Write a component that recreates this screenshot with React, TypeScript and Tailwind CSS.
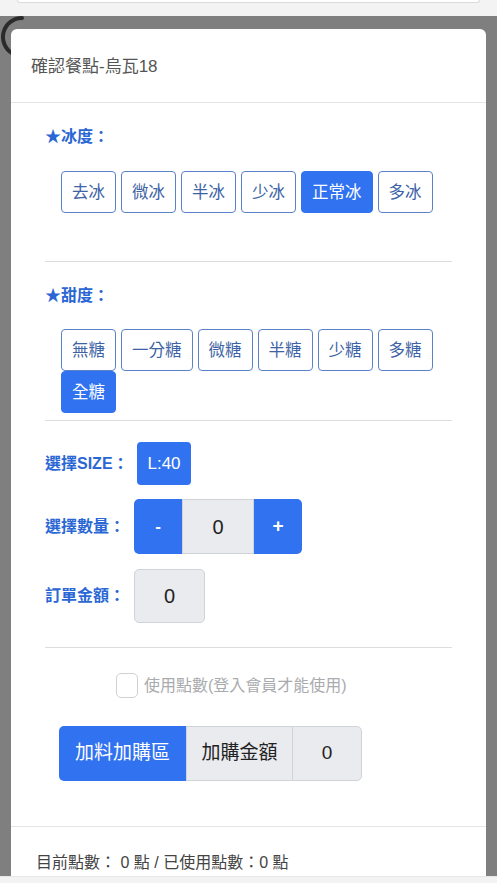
import React from "react";

const FONT = { fontFamily: '"Liberation Sans", "Noto Sans CJK TC", sans-serif' };

const iceOpts = ["去冰", "微冰", "半冰", "少冰", "正常冰", "多冰"];
const sugarOpts = ["無糖", "一分糖", "微糖", "半糖", "少糖", "多糖", "全糖"];

function OptBtn({ label, active }: { label: string; active?: boolean }) {
  return (
    <div
      className={
        active
          ? "h-[42px] px-[10px] flex items-center justify-center rounded-[4px] border border-[#3072f0] bg-[#3072f0] text-white text-[16.5px]"
          : "h-[42px] px-[10px] flex items-center justify-center rounded-[4px] border-[1.5px] border-[#5a82c8] bg-white text-[#3d63a6] text-[16.5px]"
      }
    >
      {label}
    </div>
  );
}

export default function App() {
  return (
    <div className="relative w-[497px] h-[883px] overflow-hidden bg-[#7f7f7f]" style={FONT}>
      <div className="h-[16px] bg-[#f3f3f4] px-[17px]">
        <div className="h-[3px] bg-white border-b border-x border-[#dcdcdc] rounded-b-[6px]" />
      </div>

      <svg className="absolute left-0 top-0" width="40" height="70" viewBox="0 0 40 70">
        <path d="M 22 18 A 19 19 0 0 0 12.2 53.3" fill="none" stroke="#2b2b2b" strokeWidth="4" strokeLinecap="round" />
      </svg>

      <div className="relative z-10 mx-[11px] mt-[13px] bg-white rounded-t-[6px]">
        <div className="h-[74px] px-[20px] pt-[2px] flex items-center border-b border-[#e3e5e8]">
          <span className="text-[17px] text-[#555555]">確認餐點-烏瓦18</span>
        </div>

        <div className="px-[34px] pt-[22px] pb-[45px]">
          <div className="text-[16px] leading-[24px] font-bold text-[#2a67d4]">★冰度：</div>
          <div className="mt-[22px] ml-[16px] flex flex-wrap gap-x-[5px]">
            {iceOpts.map((o) => (
              <OptBtn key={o} label={o} active={o === "正常冰"} />
            ))}
          </div>
          <div className="mt-[48px] h-px bg-[#dcdde0]" />

          <div className="mt-[22px] text-[16px] leading-[24px] font-bold text-[#2a67d4]">★甜度：</div>
          <div className="mt-[21px] ml-[16px] flex flex-wrap gap-x-[5px]">
            {sugarOpts.map((o) => (
              <OptBtn key={o} label={o} active={o === "全糖"} />
            ))}
          </div>
          <div className="mt-[7px] h-px bg-[#dcdde0]" />

          <div className="mt-[21px] flex items-center">
            <span className="w-[92px] text-[16px] font-bold text-[#2a67d4]">選擇SIZE：</span>
            <div className="h-[43px] w-[54px] flex items-center justify-center rounded-[4px] bg-[#3072f0] text-white text-[17px]">
              L:40
            </div>
          </div>

          <div className="mt-[14px] flex items-center">
            <span className="w-[89px] text-[16px] font-bold text-[#2a67d4]">選擇數量：</span>
            <div className="flex">
              <div className="h-[55px] w-[48px] flex items-center justify-center rounded-l-[5px] bg-[#3072f0] text-white text-[17px] font-bold">
                -
              </div>
              <div className="h-[55px] w-[72px] flex items-center justify-center border border-[#d0d3d8] bg-[#e9ebee] text-[#222] text-[20px]">
                0
              </div>
              <div className="h-[55px] w-[48px] flex items-center justify-center rounded-r-[5px] bg-[#3072f0] text-white text-[19px] font-bold">
                +
              </div>
            </div>
          </div>

          <div className="mt-[15px] flex items-center">
            <span className="w-[89px] text-[16px] font-bold text-[#2a67d4]">訂單金額：</span>
            <div className="h-[54px] w-[71px] flex items-center justify-center rounded-[5px] border border-[#d0d3d8] bg-[#e9ebee] text-[#222] text-[20px]">
              0
            </div>
          </div>

          <div className="mt-[24px] h-px bg-[#dcdde0]" />

          <div className="mt-[25px] pl-[71px] flex items-center gap-[6px]">
            <div className="w-[22px] h-[25px] rounded-[5px] border border-[#cfd1d4] bg-white" />
            <span className="text-[16px] text-[#a9abae]">使用點數(登入會員才能使用)</span>
          </div>

          <div className="mt-[28px] ml-[14px] flex">
            <div className="h-[55px] w-[127px] flex items-center justify-center rounded-l-[5px] bg-[#3072f0] text-white text-[19px]">
              加料加購區
            </div>
            <div className="h-[55px] w-[107px] flex items-center justify-center border border-[#d0d3d8] bg-[#e9ebee] text-[#222] text-[19px]">
              加購金額
            </div>
            <div className="h-[55px] w-[70px] -ml-px flex items-center justify-center rounded-r-[5px] border border-[#d0d3d8] bg-[#e9ebee] text-[#222] text-[19px]">
              0
            </div>
          </div>
        </div>

        <div className="border-t border-[#e3e5e8] px-[25px] pt-[24px] pb-[40px]">
          <span className="text-[16px] leading-[24px] text-[#444444]">目前點數： 0 點 / 已使用點數：0 點</span>
        </div>
      </div>

      <div className="absolute left-0 right-0 bottom-0 h-[7px] z-20 bg-[#f3f3f4] border-t border-[#e6e6e6]" />
    </div>
  );
}
